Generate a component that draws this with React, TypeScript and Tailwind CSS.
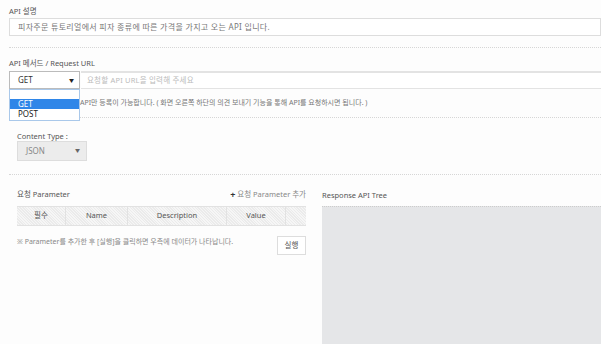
const font = "font-['Noto_Sans','Noto_Sans_CJK_KR',sans-serif]";

function Dotted({ className = "" }: { className?: string }) {
  return <div className={`border-t border-dotted border-[#d6d6d6] ${className}`} />;
}

export default function App() {
  const columns = [
    { label: "필수", w: "w-[49px]" },
    { label: "Name", w: "w-[62px]" },
    { label: "Description", w: "w-[99px]" },
    { label: "Value", w: "w-[59px]" },
    { label: "", w: "flex-1" },
  ];

  return (
    <div className={`w-[601px] h-[344px] overflow-hidden bg-[#fdfdfd] text-[#555] ${font}`}>
      <div className="pl-[9px] pt-[6px]">
        {/* API 설명 */}
        <div className="h-[10px] text-[7.5px] leading-[10px] text-[#555]">API 설명</div>
        <div className="mt-[2px] h-[18px] border border-[#ddd] bg-white pl-[8px] text-[8px] leading-[16px] tracking-[0.3px] text-[#777]">
          피자주문 튜토리얼에서 피자 종류에 따른 가격을 가지고 오는 API 입니다.
        </div>
        <Dotted className="mt-[11px]" />

        {/* API 메서드 / Request URL */}
        <div className="mt-[10px] h-[10px] text-[7.5px] leading-[10px] text-[#555]">
          API 메서드 / Request URL
        </div>
        <div className="relative mt-[3px] flex h-[18px]">
          <div className="flex w-[71px] items-center justify-between border border-[#bbb] bg-white pl-[8px] pr-[5px] text-[8px] text-[#333]">
            <span>GET</span>
            <span className="text-[5px] leading-none text-[#222]">▼</span>
          </div>
          <div className="ml-[1px] flex-1 border-y border-[#e3e3e3] border-t-2 bg-white pl-[6px] text-[7.5px] leading-[14px] tracking-[0.2px] text-[#bbb]">
            요청할 API URL을 입력해 주세요
          </div>

          {/* open dropdown */}
          <div className="absolute left-0 top-[18px] z-10 w-[71px] border border-[#a9c8ea] bg-white text-[8px] leading-[9.5px] text-[#222]">
            <div className="h-[9px]" />
            <div className="bg-[#2f86e8] pl-[8px] text-white">GET</div>
            <div className="pl-[8px] pb-[2px]">POST</div>
          </div>
        </div>
        <div className="mt-[9px] h-[10px] whitespace-nowrap pl-[71px] text-[7px] leading-[10px] text-[#777]">
          API만 등록이 가능합니다. ( 화면 오른쪽 하단의 의견 보내기 기능을 통해 API를 요청하시면 됩니다. )
        </div>
        <Dotted className="mt-[9px]" />

        {/* Content Type */}
        <div className="pl-[8px]">
          <div className="mt-[13px] h-[9px] text-[7.5px] leading-[10px] text-[#555]">Content Type :</div>
          <div className="mt-[1px] flex h-[20px] w-[70px] items-center justify-between border border-[#ddd] bg-[#ececec] pl-[8px] pr-[6px] text-[8px] text-[#888]">
            <span>JSON</span>
            <span className="text-[5px] text-[#666]">▼</span>
          </div>
        </div>
        <Dotted className="mt-[13px]" />

        {/* bottom two columns */}
        <div className="mt-[15px] flex">
          <div className="w-[297px] pl-[8px]">
            <div className="flex h-[10px] items-center justify-between text-[7.5px] text-[#555]">
              <span>요청 Parameter</span>
              <span className="flex items-center gap-[2px] text-[#888]">
                <span className="text-[9px] font-bold text-[#333]">+</span>요청 Parameter 추가
              </span>
            </div>
            <div className="mt-[6px] flex h-[20px] border-y border-[#e2e2e2] bg-[repeating-linear-gradient(45deg,#ebebeb_0px,#ebebeb_1px,#f6f6f6_1px,#f6f6f6_2px)] text-[7.5px] text-[#555]">
              {columns.map((c, i) => (
                <div
                  key={i}
                  className={`${c.w} flex items-center justify-center ${i < columns.length - 1 ? "border-r border-[#e2e2e2]" : ""}`}
                >
                  {c.label}
                </div>
              ))}
            </div>
            <div className="mt-[10px] flex items-start justify-between">
              <span className="pt-[1px] text-[7px] text-[#888]">
                ※ Parameter를 추가한 후 [실행]을 클릭하면 우측에 데이터가 나타납니다.
              </span>
              <button className="flex h-[19px] w-[29px] items-center justify-center border border-[#ddd] bg-white text-[7.5px] text-[#555]">
                실행
              </button>
            </div>
          </div>
          <div className="ml-[16px] flex-1">
            <div className="h-[10px] text-[7.5px] leading-[10px] text-[#555]">Response API Tree</div>
            <div className="mt-[6px] h-[150px] border-t border-dotted border-[#ccc] bg-[#e5e6e8]" />
          </div>
        </div>
      </div>
    </div>
  );
}
